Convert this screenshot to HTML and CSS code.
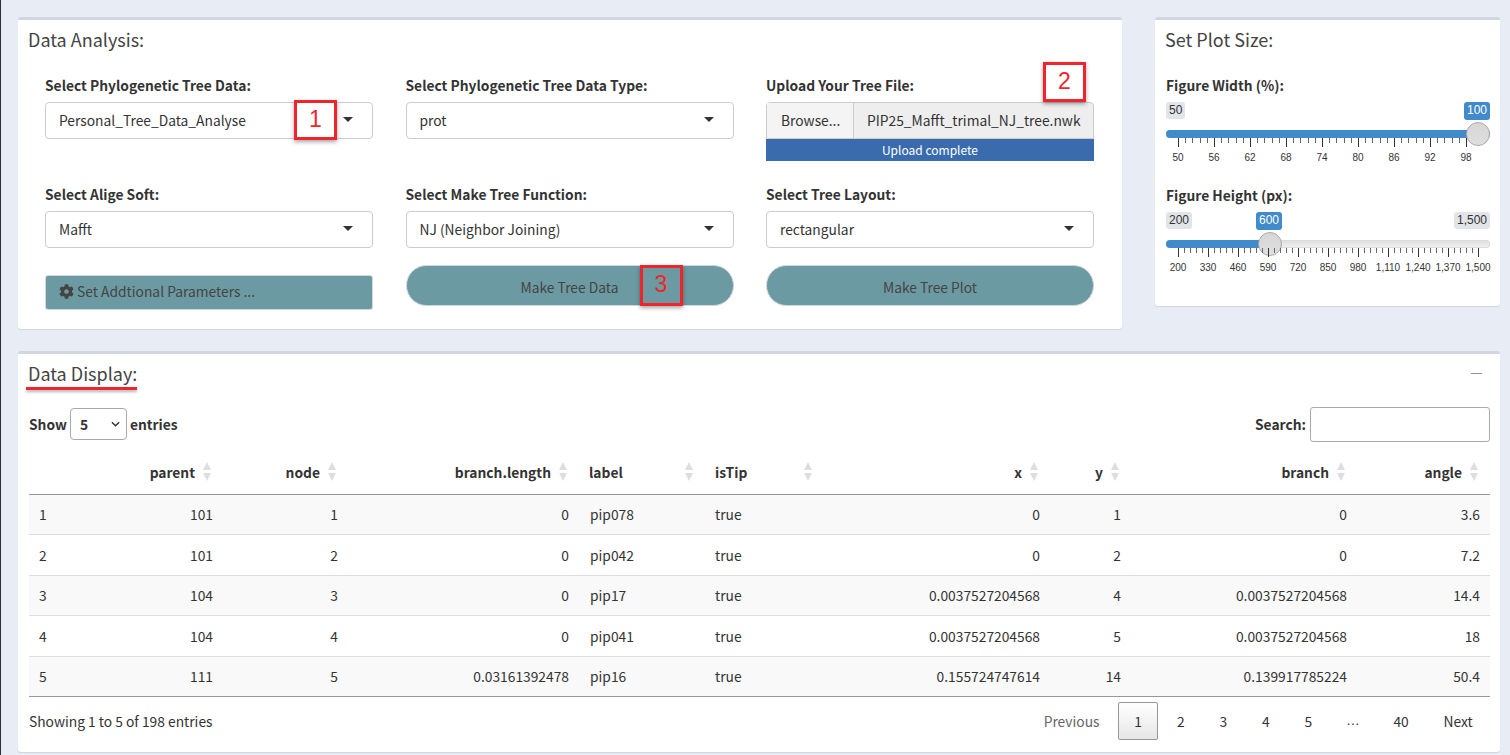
FILE: index.html
```html
<!DOCTYPE html>
<html lang="en">

<head>
    <meta charset="UTF-8">
    <meta name="viewport" content="width=device-width, initial-scale=1.0">
    <title>Tree Data</title>
    <link rel="stylesheet" href="styles.css">
</head>

<body>
    <div class="top-row">
        <section class="box box-analysis">
            <h3 class="box-title">Data Analysis:</h3>
            <div class="form-grid">
                <div class="field">
                    <label>Select Phylogenetic Tree Data:</label>
                    <div class="select-box">Personal_Tree_Data_Analyse<i class="caret"></i>
                        <span class="mark mark-1">1</span>
                    </div>
                </div>
                <div class="field">
                    <label>Select Phylogenetic Tree Data Type:</label>
                    <div class="select-box">prot<i class="caret"></i></div>
                </div>
                <div class="field">
                    <label>Upload Your Tree File:</label>
                    <div class="file-input">
                        <span class="file-btn">Browse...</span>
                        <span class="file-name">PIP25_Mafft_trimal_NJ_tree.nwk</span>
                        <span class="mark mark-2">2</span>
                    </div>
                    <div class="progress">Upload complete</div>
                </div>
                <div class="field field-low">
                    <label>Select Alige Soft:</label>
                    <div class="select-box">Mafft<i class="caret"></i></div>
                </div>
                <div class="field field-low">
                    <label>Select Make Tree Function:</label>
                    <div class="select-box">NJ (Neighbor Joining)<i class="caret"></i></div>
                </div>
                <div class="field field-low">
                    <label>Select Tree Layout:</label>
                    <div class="select-box">rectangular<i class="caret"></i></div>
                </div>
                <div class="action">
                    <button class="btn btn-square">
                        <svg class="gear" viewBox="0 0 512 512"><path d="M487.4 315.7l-42.6-24.6c4.3-23.2 4.3-47 0-70.2l42.6-24.6c4.9-2.8 7.1-8.6 5.5-14-11.1-35.6-30-67.8-54.7-94.6-3.8-4.1-10-5.1-14.8-2.3L380.8 110c-17.9-15.4-38.5-27.3-60.8-35.1V25.8c0-5.6-3.9-10.5-9.4-11.7-36.7-8.2-74.3-7.8-109.2 0-5.5 1.2-9.4 6.1-9.4 11.7V75c-22.2 7.9-42.8 19.8-60.8 35.1L88.7 85.5c-4.9-2.8-11-1.9-14.8 2.3-24.7 26.7-43.6 58.9-54.7 94.6-1.7 5.4.6 11.2 5.5 14L67.3 221c-4.3 23.2-4.3 47 0 70.2l-42.6 24.6c-4.9 2.8-7.1 8.6-5.5 14 11.1 35.6 30 67.8 54.7 94.6 3.8 4.1 10 5.1 14.8 2.3l42.6-24.6c17.9 15.4 38.5 27.3 60.8 35.1v49.2c0 5.6 3.9 10.5 9.4 11.7 36.7 8.2 74.3 7.8 109.2 0 5.5-1.2 9.4-6.1 9.4-11.7v-49.2c22.2-7.9 42.8-19.8 60.8-35.1l42.6 24.6c4.9 2.8 11 1.9 14.8-2.3 24.7-26.7 43.6-58.9 54.7-94.6 1.5-5.5-.7-11.3-5.6-14.1zM256 336c-44.1 0-80-35.9-80-80s35.9-80 80-80 80 35.9 80 80-35.9 80-80 80z"/></svg>
                        Set Addtional Parameters ...
                    </button>
                </div>
                <div class="action action-pill">
                    <button class="btn btn-pill">Make Tree Data</button>
                    <span class="mark mark-3">3</span>
                </div>
                <div class="action action-pill">
                    <button class="btn btn-pill">Make Tree Plot</button>
                </div>
            </div>
        </section>

        <section class="box box-size">
            <h3 class="box-title">Set Plot Size:</h3>
            <div class="slider-field">
                <label>Figure Width (%):</label>
                <div class="slider">
                    <span class="tag tag-min">50</span>
                    <span class="tag tag-value tag-width">100</span>
                    <div class="track"><div class="fill fill-width"></div></div>
                    <div class="handle handle-width"></div>
                    <div class="ticks ticks-width"></div>
                    <div class="tick-labels">
                        <span>50</span><span>56</span><span>62</span><span>68</span><span>74</span><span>80</span><span>86</span><span>92</span><span>98</span>
                    </div>
                </div>
            </div>
            <div class="slider-field">
                <label>Figure Height (px):</label>
                <div class="slider">
                    <span class="tag tag-min">200</span>
                    <span class="tag tag-value tag-height">600</span>
                    <span class="tag tag-max">1,500</span>
                    <div class="track"><div class="fill fill-height"></div></div>
                    <div class="handle handle-height"></div>
                    <div class="ticks ticks-height"></div>
                    <div class="tick-labels labels-height">
                        <span>200</span><span>330</span><span>460</span><span>590</span><span>720</span><span>850</span><span>980</span><span>1,110</span><span>1,240</span><span>1,370</span><span>1,500</span>
                    </div>
                </div>
            </div>
        </section>
    </div>

    <section class="box box-table">
        <button class="collapse-btn"></button>
        <h3 class="box-title title-marked">Data Display:</h3>
        <div class="dt-top">
            <div class="dt-length">
                <span>Show</span>
                <div class="mini-select">5
                    <svg viewBox="0 0 10 6"><path d="M1 1l4 4 4-4" fill="none" stroke="#333" stroke-width="1.6"/></svg>
                </div>
                <span>entries</span>
            </div>
            <div class="dt-search">
                <span>Search:</span>
                <div class="search-input"></div>
            </div>
        </div>
        <table class="dt-table">
            <colgroup>
                <col class="c-idx"><col class="c-parent"><col class="c-node"><col class="c-length"><col class="c-label"><col class="c-tip"><col class="c-x"><col class="c-y"><col class="c-branch"><col class="c-angle">
            </colgroup>
            <thead>
                <tr>
                    <th></th>
                    <th class="num sort">parent</th>
                    <th class="num sort">node</th>
                    <th class="num sort">branch.length</th>
                    <th class="sort">label</th>
                    <th class="sort">isTip</th>
                    <th class="num sort">x</th>
                    <th class="num sort">y</th>
                    <th class="num sort">branch</th>
                    <th class="num sort">angle</th>
                </tr>
            </thead>
            <tbody>
                <tr>
                    <td>1</td><td class="num">101</td><td class="num">1</td><td class="num">0</td><td>pip078</td><td>true</td><td class="num">0</td><td class="num">1</td><td class="num">0</td><td class="num">3.6</td>
                </tr>
                <tr>
                    <td>2</td><td class="num">101</td><td class="num">2</td><td class="num">0</td><td>pip042</td><td>true</td><td class="num">0</td><td class="num">2</td><td class="num">0</td><td class="num">7.2</td>
                </tr>
                <tr>
                    <td>3</td><td class="num">104</td><td class="num">3</td><td class="num">0</td><td>pip17</td><td>true</td><td class="num">0.0037527204568</td><td class="num">4</td><td class="num">0.0037527204568</td><td class="num">14.4</td>
                </tr>
                <tr>
                    <td>4</td><td class="num">104</td><td class="num">4</td><td class="num">0</td><td>pip041</td><td>true</td><td class="num">0.0037527204568</td><td class="num">5</td><td class="num">0.0037527204568</td><td class="num">18</td>
                </tr>
                <tr>
                    <td>5</td><td class="num">111</td><td class="num">5</td><td class="num">0.03161392478</td><td>pip16</td><td>true</td><td class="num">0.155724747614</td><td class="num">14</td><td class="num">0.139917785224</td><td class="num">50.4</td>
                </tr>
            </tbody>
        </table>
        <div class="dt-bottom">
            <div class="dt-info">Showing 1 to 5 of 198 entries</div>
            <div class="pager">
                <a class="muted">Previous</a>
                <a class="current">1</a>
                <a>2</a>
                <a>3</a>
                <a>4</a>
                <a>5</a>
                <span class="dots">…</span>
                <a>40</a>
                <a>Next</a>
            </div>
        </div>
    </section>
</body>

</html>
```

FILE: styles.css
```css
* {
    padding: 0;
    margin: 0;
    box-sizing: border-box;
}

body {
    width: 1510px;
    height: 755px;
    overflow: hidden;
    padding: 17px 10px 0 17px;
    background: #e8ecf4;
    border-left: 1px solid #2a2e35;
    font-family: "Noto Sans CJK SC", "Source Sans Pro", sans-serif;
    font-size: 13.8px;
    color: #333;
}

.top-row {
    display: flex;
    align-items: flex-start;
    gap: 33px;
    margin-bottom: 22px;
}

.box {
    position: relative;
    background: #fff;
    border-top: 3px solid #d2d6de;
    border-radius: 3px;
    box-shadow: 0 1px 1px rgba(0, 0, 0, .1);
}

.box-title {
    font-size: 18px;
    font-weight: 400;
    line-height: 22px;
    color: #444;
    margin: -1px 0 1px -1px;
}

.box-analysis {
    width: 1104px;
    height: 312px;
    padding: 9px 28px 0 11px;
}

.box-analysis .form-grid {
    display: grid;
    grid-template-columns: repeat(3, 328px);
    grid-template-rows: 109px 81px auto;
    column-gap: 32.5px;
    margin: 25px 0 0 16px;
}

.field label,
.slider-field label {
    display: block;
    font-weight: 700;
    line-height: 20px;
    margin-bottom: 7px;
}

.select-box {
    position: relative;
    height: 37px;
    border: 1px solid #ccc;
    border-radius: 4px;
    padding-left: 13px;
    line-height: 35px;
    background: #fff;
}

.caret {
    position: absolute;
    right: 19px;
    top: 14px;
    border-left: 5px solid transparent;
    border-right: 5px solid transparent;
    border-top: 5px solid #333;
}

.file-input {
    position: relative;
    display: flex;
    height: 37px;
    border: 1px solid #ccc;
    border-radius: 4px 4px 0 0;
    line-height: 35px;
    background: #eee;
}

.file-btn {
    width: 87px;
    padding-left: 14px;
    background: #f4f4f4;
    border-right: 1px solid #ccc;
}

.file-name {
    padding-left: 13px;
}

.progress {
    height: 22px;
    background: #3a6cad;
    color: #fff;
    font-size: 12px;
    line-height: 22px;
    text-align: center;
}

.action {
    position: relative;
    padding-top: 10px;
}

.action-pill {
    padding-top: 0;
}

.btn {
    display: block;
    width: 100%;
    font: inherit;
    color: #444;
    background: #6c9aa2;
    border: 1px solid #d2d6de;
}

.btn-square {
    height: 35px;
    border-radius: 3px;
    text-align: left;
    padding: 0 0 3px 13px;
    line-height: 30px;
}

.btn-pill {
    height: 41px;
    border-radius: 21px;
    padding-top: 3px;
}

.gear {
    width: 15px;
    height: 15px;
    fill: #444;
    vertical-align: -2px;
}

/* red marks drawn over the shot */
.mark {
    position: absolute;
    width: 43px;
    height: 40px;
    border: 3px solid #f0242a;
    box-shadow: 0 2px 4px rgba(0, 0, 0, .35);
    color: #f0242a;
    font-family: "Liberation Sans", sans-serif;
    font-size: 23px;
    line-height: 33px;
    text-align: center;
    font-weight: 400;
    background: transparent;
}

.mark-1 {
    right: 35px;
    top: -3px;
}

.mark-2 {
    right: 7px;
    top: -41px;
}

.mark-3 {
    left: 234px;
    top: 0;
    height: 41px;
}

.box-size {
    width: 345px;
    height: 289px;
    padding: 9px 10px 0 11px;
}

.slider-field {
    margin-top: 25px;
}

.slider-field label {
    line-height: 20px;
    margin-bottom: 8px;
}

.slider-field + .slider-field {
    margin-top: 16px;
}

.slider {
    position: relative;
    height: 67px;
    margin-top: -1px;
}

.tag {
    position: absolute;
    top: 0;
    height: 17px;
    padding: 0 3px;
    border-radius: 3px;
    background: #e1e4e9;
    font-family: "Liberation Sans", sans-serif;
    font-size: 12px;
    line-height: 17px;
    color: #333;
}

.tag-min {
    left: 0;
}

.tag-max {
    right: 0;
}

.tag-value {
    background: #428bca;
    color: #fff;
    height: 18px;
}

.tag-width {
    right: 0;
}

.tag-height {
    left: 90px;
}

.track {
    position: absolute;
    left: 0;
    right: 0;
    top: 28px;
    height: 8px;
    border-radius: 4px;
    background: linear-gradient(#ddd, #f2f2f2);
    box-shadow: inset 0 0 0 1px #dcdcdc;
    overflow: hidden;
}

.fill {
    height: 100%;
    background: #428bca;
}

.fill-width {
    width: 100%;
}

.fill-height {
    width: 98px;
}

.handle {
    position: absolute;
    top: 20px;
    width: 24px;
    height: 24px;
    border-radius: 50%;
    background: linear-gradient(#d6d6d6, #dfdfdf);
    border: 1px solid #aaa;
}

.handle-width {
    left: 300px;
}

.handle-height {
    left: 92px;
}

.ticks {
    position: absolute;
    left: 12px;
    top: 36px;
    width: 301px;
    height: 9px;
    background-repeat: no-repeat, no-repeat;
}

.ticks-width {
    width: 289px;
    background-image:
        repeating-linear-gradient(90deg, #333 0 1px, transparent 1px 36px),
        repeating-linear-gradient(90deg, #666 0 1px, transparent 1px 7.2px);
    background-size: 100% 9px, 100% 5px;
}

.ticks-height {
    background-image:
        repeating-linear-gradient(90deg, #333 0 1px, transparent 1px 30px),
        repeating-linear-gradient(90deg, #666 0 1px, transparent 1px 6px);
    background-size: 100% 9px, 100% 5px;
}

.tick-labels {
    position: absolute;
    left: -6px;
    top: 49px;
    display: flex;
    font-family: "Liberation Sans", sans-serif;
    font-size: 10px;
    line-height: 14px;
    color: #333;
}

.tick-labels span {
    flex: 0 0 36px;
    text-align: center;
}

.labels-height {
    left: -3px;
}

.labels-height span {
    flex: 0 0 30px;
}

.box-table {
    width: 1482px;
    height: 401px;
    padding: 9px 10px 0 11px;
}

.collapse-btn {
    position: absolute;
    right: 18px;
    top: 19px;
    width: 11px;
    height: 1px;
    border: 0;
    background: #8a93a6;
}

.title-marked {
    position: relative;
    display: inline-block;
}

.title-marked::after {
    content: "";
    position: absolute;
    left: -2px;
    right: 0;
    top: 25px;
    height: 3px;
    background: #f0242a;
    box-shadow: 0 2px 3px rgba(0, 0, 0, .3);
}

.dt-top {
    display: flex;
    justify-content: space-between;
    align-items: center;
    margin-top: 21px;
    height: 36px;
    font-weight: 700;
}

.dt-length,
.dt-search {
    display: flex;
    align-items: center;
    gap: 3px;
}

.dt-search {
    gap: 4px;
}

.mini-select {
    display: flex;
    align-items: center;
    justify-content: space-between;
    width: 57px;
    height: 32px;
    padding: 0 6px 0 9px;
    border: 1px solid #aaa;
    border-radius: 4px;
}

.mini-select svg {
    width: 9px;
    height: 6px;
}

.search-input {
    width: 180px;
    height: 35px;
    border: 1px solid #aaa;
    border-radius: 3px;
}

.dt-table {
    width: 1461px;
    margin-top: 8px;
    table-layout: fixed;
    border-collapse: collapse;
}

.c-idx { width: 51px; }
.c-parent { width: 143px; }
.c-node { width: 125px; }
.c-length { width: 231px; }
.c-label { width: 126px; }
.c-tip { width: 119px; }
.c-x { width: 226px; }
.c-y { width: 81px; }
.c-branch { width: 226px; }
.c-angle { width: 133px; }

.dt-table th {
    position: relative;
    height: 44px;
    padding: 0 28px 0 10px;
    text-align: left;
    border-bottom: 1px solid #999;
}

.dt-table th.num {
    text-align: right;
}

.sort::before,
.sort::after {
    content: "";
    position: absolute;
    right: 12px;
    border-left: 4.5px solid transparent;
    border-right: 4.5px solid transparent;
}

.sort::before {
    top: 12px;
    border-bottom: 8px solid #dedede;
}

.sort::after {
    top: 23px;
    border-top: 8px solid #dedede;
}

.dt-table td {
    height: 40.5px;
    padding: 0 10px;
    border-bottom: 1px solid #ddd;
}

.dt-table td:nth-child(5) {
    padding-left: 11px;
}

.dt-table td.num {
    text-align: right;
}

.dt-table tbody tr:nth-child(odd) {
    background: #f9f9f9;
}

.dt-table tbody tr:last-child td {
    border-bottom-color: #999;
}

.dt-bottom {
    display: flex;
    justify-content: space-between;
    align-items: center;
    margin-top: 5px;
    height: 38px;
}

.pager {
    display: flex;
    align-items: center;
    margin-right: 1px;
}

.pager a,
.pager span {
    height: 38px;
    padding: 0 15.2px;
    margin-left: 2.5px;
    border: 1px solid transparent;
    border-radius: 2px;
    line-height: 36px;
}

.pager .muted {
    color: #666;
}

.pager .current {
    border-color: #979797;
    background: linear-gradient(#fff, #e6e6e6);
}

.pager .dots {
    padding: 0 14px;
    font-family: "Liberation Sans", sans-serif;
}
```
